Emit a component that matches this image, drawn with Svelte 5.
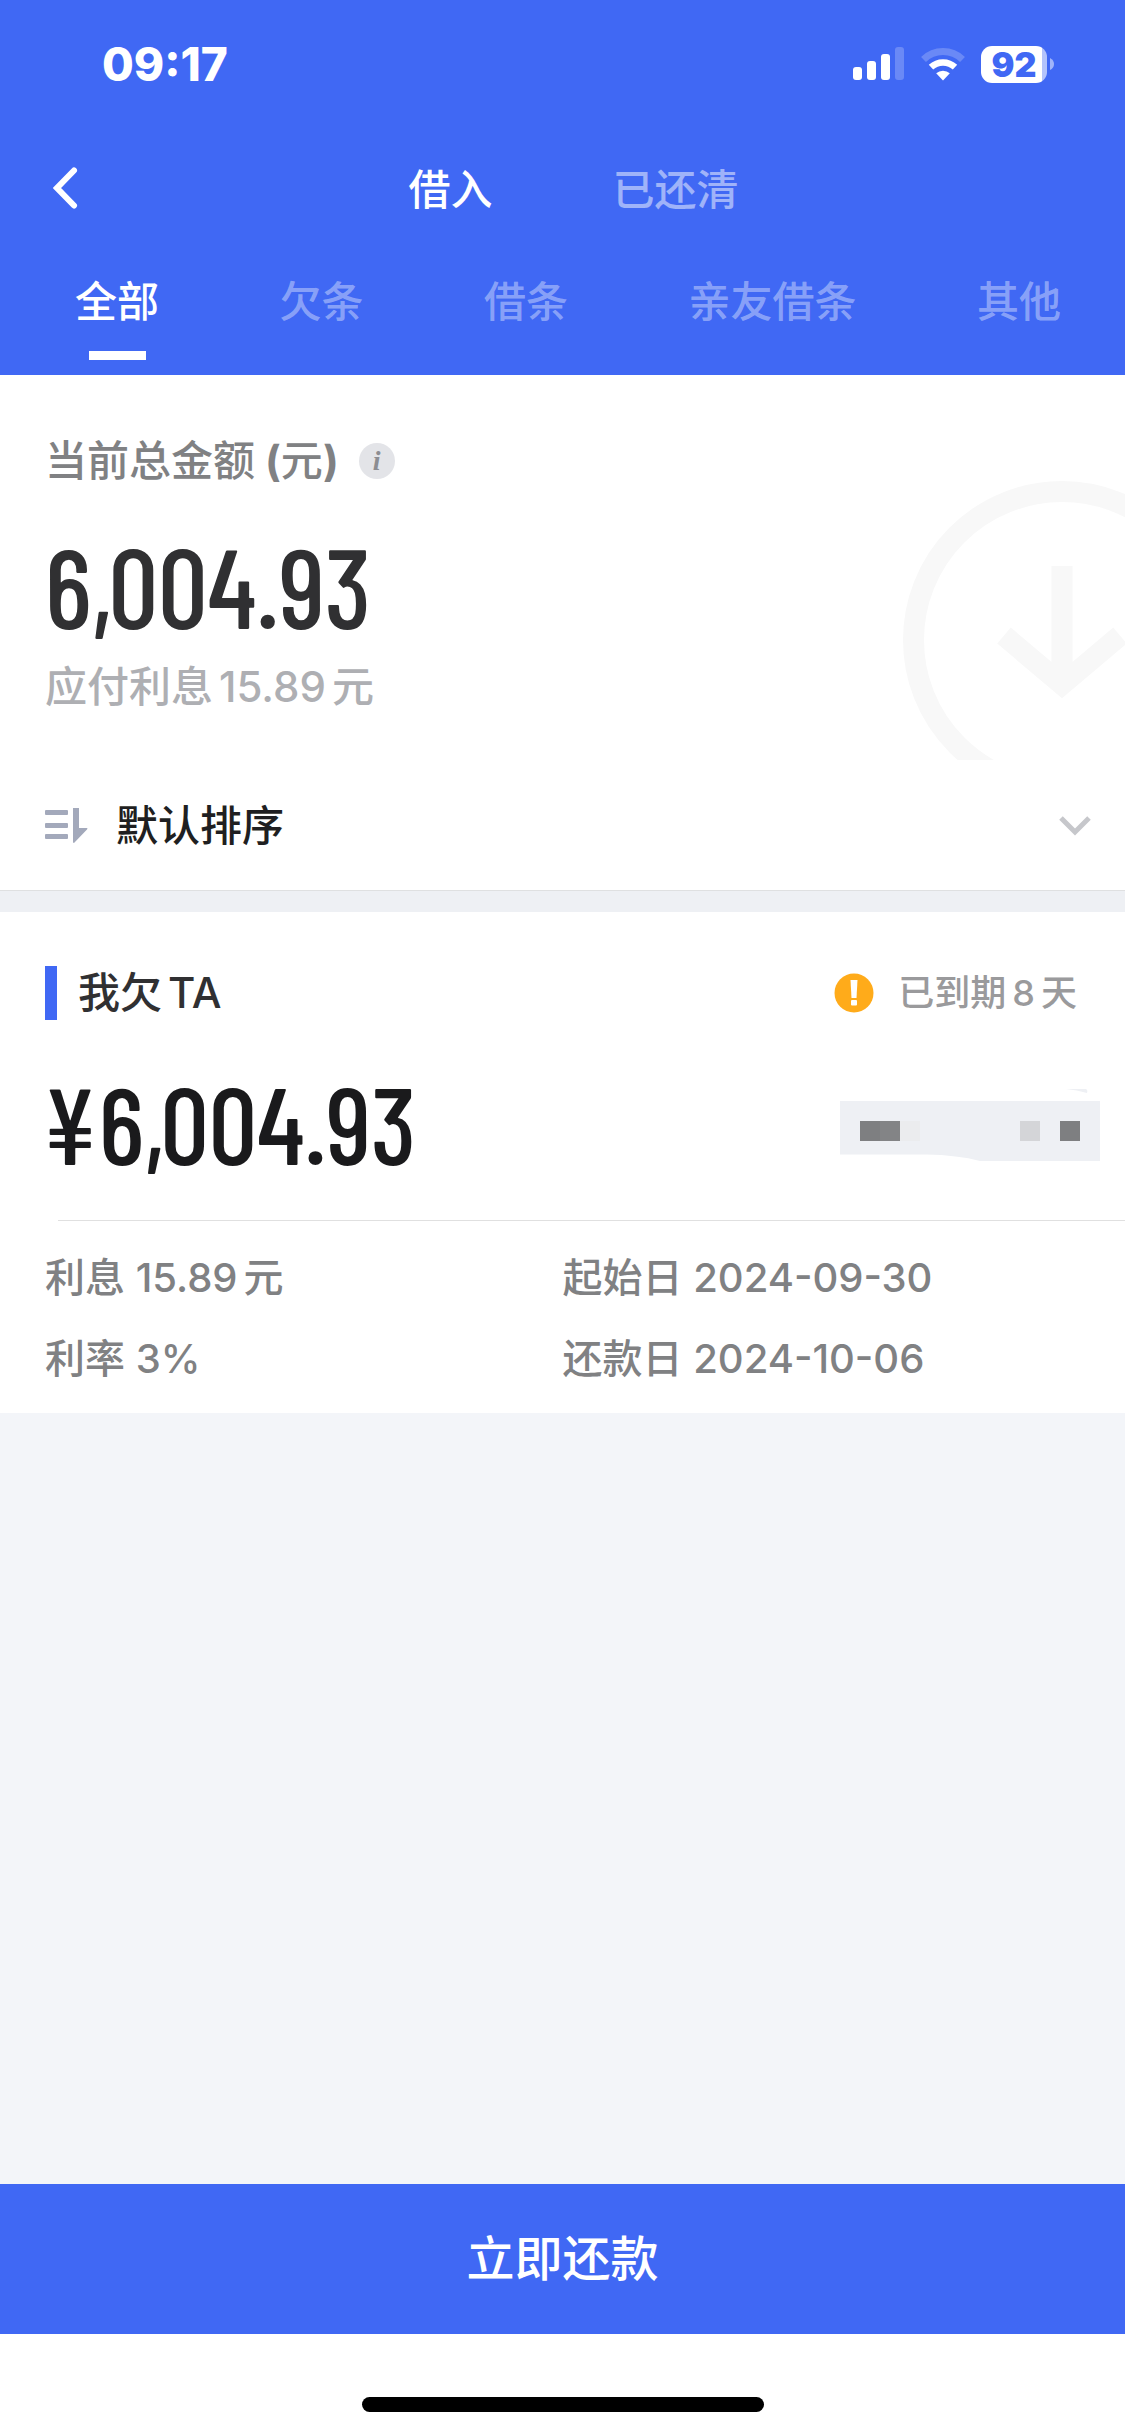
<script lang="ts">
  const statuses = ["借入", "已还清"];
  const kinds = ["全部", "欠条", "借条", "亲友借条", "其他"];

  let status = $state("借入");
  let kind = $state("全部");
  let sort = $state("default");
</script>

<div class="page">
  <header>
    <div class="status-bar">
      <time>09:17</time>
      <div class="indicators">
        <svg width="52" height="34" viewBox="0 0 52 34" fill="#fff" aria-hidden="true">
          <rect x="0" y="20" width="9" height="13" rx="3" />
          <rect x="14" y="14" width="9" height="19" rx="3" />
          <rect x="28" y="7" width="9" height="26" rx="3" />
          <rect x="42" y="0" width="9" height="33" rx="3" opacity="0.22" />
        </svg>
        <svg width="44" height="34" viewBox="0 0 44 34" aria-hidden="true">
          <path d="M2.5 12.5a28 28 0 0 1 39 0" fill="none" stroke="#fff" stroke-width="7" opacity="0.22" />
          <path d="M10 20.2a17.5 17.5 0 0 1 24 0" fill="none" stroke="#fff" stroke-width="6.4" />
          <path d="M22 33.5l-6.8-7.2a10 10 0 0 1 13.6 0z" fill="#fff" />
        </svg>
        <div class="battery">
          <span class="level">92</span>
          <svg width="4" height="12" viewBox="0 0 4 12" aria-hidden="true">
            <path d="M0 0q4 2 4 6t-4 6z" fill="#fff" opacity="0.5" />
          </svg>
        </div>
      </div>
    </div>

    <div class="title-bar">
      <button class="back" aria-label="返回">
        <svg width="26" height="44" viewBox="0 0 26 44" aria-hidden="true">
          <path d="M21 4.500L4 22l17 17.500" fill="none" stroke="#fff" stroke-width="6" stroke-linecap="round" />
        </svg>
      </button>
      <nav class="statuses">
        {#each statuses as item}
          <button class:active={status === item} onclick={() => (status = item)}>{item}</button>
        {/each}
      </nav>
    </div>

    <nav class="kinds">
      {#each kinds as item}
        <button class:active={kind === item} onclick={() => (kind = item)}>{item}</button>
      {/each}
    </nav>
  </header>

  <section class="summary">
    <div class="total">
      <svg class="watermark" width="222" height="279" viewBox="0 0 222 279" aria-hidden="true">
        <g fill="none" stroke="#f8f8f8" stroke-width="21">
          <circle cx="159" cy="159" r="148.5" />
          <path d="M159 85v112" />
          <path d="M101 154.500l58 49 58-49" />
        </g>
      </svg>
      <div class="label">
        <h1>当前总金额<span class="paren">(</span>元<span>)</span></h1>
        <button class="info" aria-label="说明">i</button>
      </div>
      <p class="amount">6,004.93</p>
      <p class="interest">应付利息<span class="num">15.89</span>元</p>
    </div>

    <div class="sort">
      <svg width="43" height="36" viewBox="0 0 43 36" fill="#a3a9bb" aria-hidden="true">
        <rect x="0" y="2" width="23" height="5" rx="1" />
        <rect x="0" y="15" width="23" height="5" rx="1" />
        <rect x="0" y="26" width="23" height="5" rx="1" />
        <path d="M28 0h6v20h8q1 0 0 1.500L29 35q-1 0-1-1z" />
      </svg>
      <select bind:value={sort} aria-label="排序方式">
        <option value="default">默认排序</option>
      </select>
      <svg class="chevron" width="34" height="22" viewBox="0 0 34 22" aria-hidden="true">
        <path d="M3 3l14 14L31 3" fill="none" stroke="#c6c7cb" stroke-width="5" />
      </svg>
    </div>
  </section>

  <article class="loan">
    <div class="loan-head">
      <h2>我欠<span class="num">TA</span></h2>
      <p class="due">
        <svg width="40" height="40" viewBox="0 0 40 40" aria-hidden="true">
          <circle cx="20" cy="20" r="19.500" fill="#ffab1a" />
          <path d="M16.500 7h7l-1 18h-5z" fill="#fff" />
          <rect x="17" y="27" width="6" height="5.500" rx="1" fill="#fff" />
        </svg>
        <span>已到期<span class="num">8</span>天</span>
      </p>
    </div>

    <div class="loan-amount">
      <p class="amount">¥6,004.93</p>
      <!-- masked lender name -->
      <svg width="260" height="72" viewBox="0 0 260 72" aria-label="姓名已隐藏" role="img">
        <path d="M226 0h20q2 1 1 4-10-3-21-4z" fill="#eef0f4" />
        <path d="M0 12h260v60H140q-22-6-54-6.500H0z" fill="#eef0f4" />
        <rect x="20" y="32" width="20" height="20" fill="#7e7f81" />
        <rect x="40" y="32" width="20" height="20" fill="#838486" />
        <rect x="60" y="32" width="20" height="20" fill="#ebecee" />
        <rect x="180" y="32" width="20" height="20" fill="#d4d5d8" />
        <rect x="220" y="32" width="20" height="20" fill="#7e7f81" />
      </svg>
    </div>

    <ul class="details">
      <li>利息 15.89<span class="unit">元</span></li>
      <li>起始日 2024-09-30</li>
      <li>利率 3%</li>
      <li>还款日 2024-10-06</li>
    </ul>
  </article>

  <footer>
    <button class="repay">立即还款</button>
    <div class="home"></div>
  </footer>
</div>

<style>
  :global(body) {
    margin: 0;
  }

  .page {
    --blue: #4068f4;
    display: flex;
    flex-direction: column;
    min-height: 100vh;
    background: #f3f5f9;
    font-family: Inter, "Noto Sans CJK SC", sans-serif;
    font-size: 42px;
    font-weight: 500;
    line-height: 60px;
    text-autospace: no-autospace;
  }

  h1,
  h2,
  p,
  ul {
    margin: 0;
    padding: 0;
    font-size: inherit;
    font-weight: inherit;
  }

  button,
  select {
    margin: 0;
    padding: 0;
    border: 0;
    background: none;
    color: inherit;
    font: inherit;
  }

  svg {
    display: block;
    flex: none;
  }

  header {
    background: var(--blue);
    color: #fff;
  }

  .status-bar {
    display: flex;
    align-items: center;
    justify-content: space-between;
    height: 128px;
    padding: 0 71px 0 102px;
  }

  time {
    font-size: 46px;
    font-weight: 800;
  }

  .indicators {
    display: flex;
    align-items: center;
    gap: 16px;
  }

  .battery {
    display: flex;
    align-items: center;
    gap: 3px;
  }

  .level {
    width: 66px;
    height: 37px;
    border-radius: 11px;
    background: linear-gradient(to right, #fff 61px, #b3c3fb 61px);
    color: var(--blue);
    font-size: 34px;
    font-weight: 900;
    line-height: 37px;
    text-align: center;
  }

  .title-bar {
    display: grid;
    grid-template-columns: 132px 1fr 110px;
    align-items: center;
    height: 124px;
  }

  .back {
    justify-self: start;
    padding: 0 0 4px 53px;
  }

  .statuses {
    display: flex;
    justify-content: center;
    gap: 120px;
  }

  .statuses button {
    color: rgba(255, 255, 255, 0.5);
  }

  .kinds {
    display: flex;
    justify-content: space-between;
    padding: 20px 64px 15px 75px;
  }

  .kinds button {
    display: flex;
    flex-direction: column;
    align-items: center;
    gap: 19px;
    color: rgba(255, 255, 255, 0.4);
  }

  .kinds button::after {
    width: 57px;
    height: 9px;
    content: "";
  }

  .statuses .active,
  .kinds .active {
    color: #fff;
  }

  .kinds .active::after {
    background: #fff;
  }

  .summary {
    border-bottom: 1px solid #dfe0e1;
    background: #fff;
  }

  .total {
    position: relative;
    padding: 56px 45px 43px;
  }

  .watermark {
    position: absolute;
    right: 0;
    bottom: 0;
  }

  .label {
    display: flex;
    align-items: center;
    gap: 20px;
    color: #808183;
  }

  .label span {
    font-weight: 700;
  }

  .paren {
    margin-left: 10px;
  }

  .info {
    width: 36px;
    height: 36px;
    border-radius: 50%;
    background: #e3e4e8;
    color: #8c8d92;
    font: italic bold 28px/36px "Liberation Serif", serif;
  }

  .amount {
    font-family: "Barlow Condensed", "Roboto Condensed", "Noto Sans CJK SC", sans-serif;
    font-weight: 500;
    line-height: 120px;
  }

  .total .amount {
    padding: 34px 0 12px;
    color: #303032;
    font-size: 111px;
  }

  .interest {
    color: #aeafb3;
  }

  .num {
    margin: 0 6px;
  }

  .sort {
    display: flex;
    align-items: center;
    padding: 36px 33px 34px 45px;
  }

  select {
    flex: 1;
    height: 60px;
    margin-left: 28px;
    appearance: none;
    color: #1f1f21;
  }

  .loan {
    border-top: 21px solid #eef0f4;
    background: #fff;
  }

  .loan-head {
    display: flex;
    align-items: center;
    justify-content: space-between;
    padding: 54px 48px 0 45px;
  }

  h2 {
    padding-left: 21px;
    border-left: 12px solid var(--blue);
    color: #303032;
    line-height: 54px;
  }

  .due {
    display: flex;
    align-items: center;
    gap: 24px;
    color: #9a9a9c;
    font-size: 36px;
    line-height: 54px;
  }

  .loan-amount {
    display: flex;
    align-items: center;
    justify-content: space-between;
    padding: 42px 25px 38px 42px;
  }

  .loan-amount .amount {
    color: #1a1a1c;
    font-size: 108px;
  }

  .loan-amount svg {
    margin-top: 6px;
  }

  .details {
    display: grid;
    grid-template-columns: 1fr 1fr;
    row-gap: 21px;
    padding: 28px 0 24px;
    background: linear-gradient(#e0e0e0, #e0e0e0) 58px 0 / 100% 1px no-repeat;
    color: #808183;
    font-size: 40px;
    list-style: none;
  }

  .details li:nth-child(odd) {
    padding-left: 45px;
  }

  .unit {
    margin-left: 6px;
  }

  footer {
    margin-top: auto;
    background: #fff;
  }

  .repay {
    display: block;
    width: 100%;
    height: 150px;
    background: var(--blue);
    color: #fff;
    font-size: 48px;
  }

  .home {
    width: 402px;
    height: 15px;
    margin: 63px auto 24px;
    border-radius: 8px;
    background: #000;
  }
</style>
